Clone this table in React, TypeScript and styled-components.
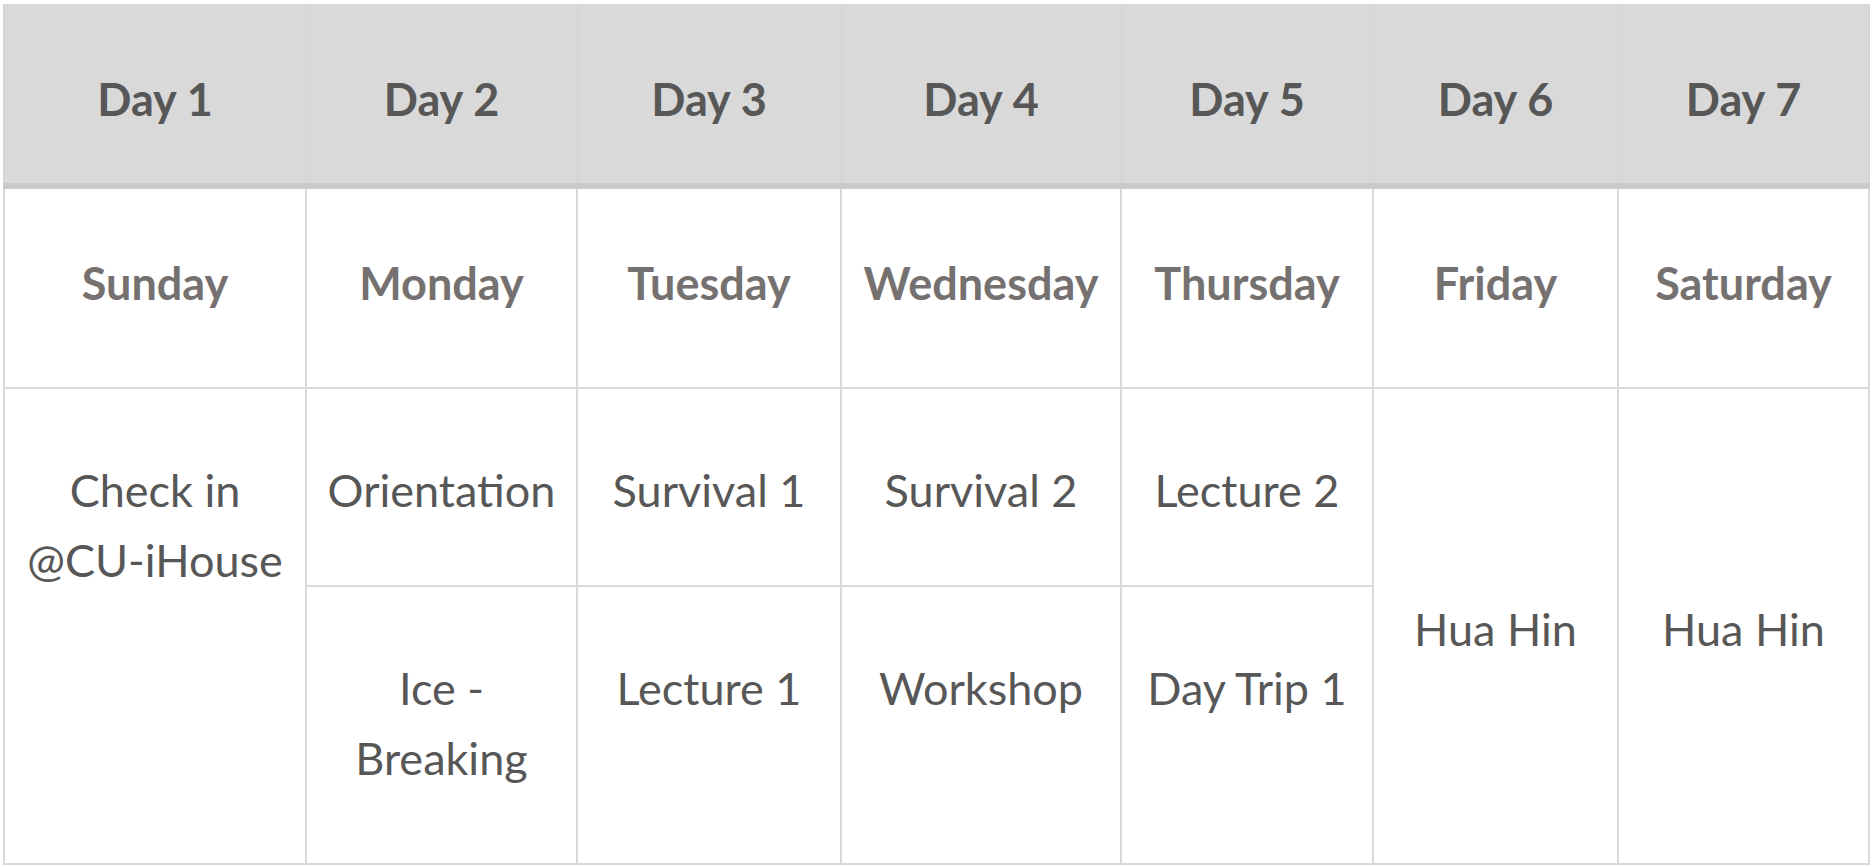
import React from "react";
import styled, { createGlobalStyle } from "styled-components";

const Global = createGlobalStyle`
  html, body {
    margin: 0;
    padding: 0;
    background: #ffffff;
  }
  body {
    font-family: "Lato", "Open Sans", sans-serif;
  }
`;

const COLS = "300px 269px 262px 278px 250px 243px 249px";

const Page = styled.div`
  padding: 4px 0 0 3px;
`;

const Table = styled.div`
  display: flex;
  flex-direction: column;
  width: 1867px;
`;

const HeaderRow = styled.div`
  display: grid;
  grid-template-columns: ${COLS};
  column-gap: 2px;
  padding: 0 2px;
  height: 179px;
  background: #d6d6d6;
  border-bottom: 6px solid #cacaca;
`;

const HeaderCell = styled.div`
  display: flex;
  align-items: center;
  justify-content: center;
  padding-top: 10px;
  background: #d9d9d9;
  color: #575757;
  font-weight: 700;
  font-size: 45px;
`;

const Body = styled.div`
  display: grid;
  grid-template-columns: ${COLS};
  grid-template-rows: 198px 196px 276px;
  gap: 2px;
  padding: 0 2px 2px 2px;
  background: #d9d9d9;
`;

const DayCell = styled.div`
  display: flex;
  align-items: center;
  justify-content: center;
  padding-bottom: 10px;
  background: #ffffff;
  color: #767171;
  font-weight: 700;
  font-size: 45px;
  white-space: nowrap;
`;

const Cell = styled.div<{ $span?: number; $center?: boolean }>`
  grid-row: span ${(p) => p.$span ?? 1};
  display: flex;
  flex-direction: column;
  align-items: center;
  justify-content: ${(p) => (p.$center ? "center" : "flex-start")};
  padding-top: ${(p) => (p.$center ? "6px" : "66px")};
  background: #ffffff;
  color: #575757;
  font-weight: 400;
  font-size: 45px;
  line-height: 70px;
  text-align: center;
  white-space: nowrap;
`;

const days = ["Day 1", "Day 2", "Day 3", "Day 4", "Day 5", "Day 6", "Day 7"];
const names = ["Sunday", "Monday", "Tuesday", "Wednesday", "Thursday", "Friday", "Saturday"];

export default function App() {
  return (
    <Page>
      <Global />
      <Table>
        <HeaderRow>
          {days.map((d) => (
            <HeaderCell key={d}>{d}</HeaderCell>
          ))}
        </HeaderRow>
        <Body>
          {names.map((n) => (
            <DayCell key={n}>{n}</DayCell>
          ))}
          <Cell $span={2}>
            <span>Check in</span>
            <span>@CU-iHouse</span>
          </Cell>
          <Cell>Orientation</Cell>
          <Cell>Survival 1</Cell>
          <Cell>Survival 2</Cell>
          <Cell>Lecture 2</Cell>
          <Cell $span={2} $center>Hua Hin</Cell>
          <Cell $span={2} $center>Hua Hin</Cell>
          <Cell>
            <span>Ice -</span>
            <span>Breaking</span>
          </Cell>
          <Cell>Lecture 1</Cell>
          <Cell>Workshop</Cell>
          <Cell>Day Trip 1</Cell>
        </Body>
      </Table>
    </Page>
  );
}
